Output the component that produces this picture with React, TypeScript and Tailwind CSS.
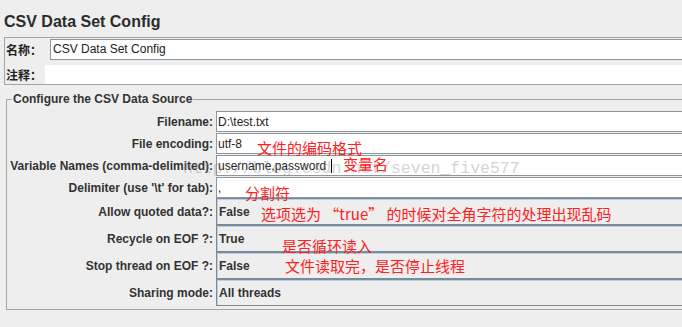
const fields = [
  { label: 'Filename:', value: 'D:\\test.txt', cursor: false },
  { label: 'File encoding:', value: 'utf-8', cursor: false },
  { label: 'Variable Names (comma-delimited):', value: 'username,password', cursor: true },
  { label: "Delimiter (use '\\t' for tab):", value: ',', cursor: false },
];

const combos = [
  { label: 'Allow quoted data?:', value: 'False' },
  { label: 'Recycle on EOF ?:', value: 'True' },
  { label: 'Stop thread on EOF ?:', value: 'False' },
  { label: 'Sharing mode:', value: 'All threads' },
];

// red notes written over the screenshot
const notes = [
  { text: '文件的编码格式', cls: 'left-[257px] top-[140px]' },
  { text: '变量名', cls: 'left-[343px] top-[156px]' },
  { text: '分割符', cls: 'left-[245px] top-[185px]' },
  { text: '选项选为 “true” 的时候对全角字符的处理出现乱码', cls: 'left-[261px] top-[206px]' },
  { text: '是否循环读入', cls: 'left-[282px] top-[238px]' },
  { text: '文件读取完，是否停止线程', cls: 'left-[285px] top-[258px]' },
];

export default function App() {
  return (
    <div className="relative w-[682px] h-[327px] overflow-hidden bg-[#eeeeee] font-['Liberation_Sans','Noto_Sans_CJK_SC',sans-serif] text-[#333333]">
      <div className="w-[700px]">
        <h1 className="h-[37px] pt-[12px] pl-[4px] text-[16px] leading-[19px] font-bold text-[#2b2b2b]">CSV Data Set Config</h1>

        <div className="ml-[4px] h-[48px] border-t border-l border-b border-[#a5a5a5]">
          <div className="flex items-center mt-[1px] h-[21px]">
            <span className="w-[45px] pl-[1px] text-[12px] font-bold font-['Noto_Sans_CJK_SC',sans-serif] leading-none text-[#222]">名称：</span>
            <div className="flex-1 h-[21px] bg-white border border-[#8e969d] pl-[2px] text-[12px] leading-[19px] text-[#222]">CSV Data Set Config</div>
          </div>
          <div className="flex items-center mt-[5px] h-[19px]">
            <span className="w-[40px] pl-[1px] text-[12px] font-bold font-['Noto_Sans_CJK_SC',sans-serif] leading-none text-[#222]">注释：</span>
            <div className="flex-1 h-[19px] bg-white"></div>
          </div>
        </div>

        <div className="relative ml-[6px] mt-[14px] h-[211px] border border-[#a5a5a5] pt-[11px]">
          <span className="absolute -top-[9px] left-[5px] px-[1px] bg-[#eeeeee] text-[12px] leading-[16px] font-bold text-[#333]">Configure the CSV Data Source</span>

          {fields.map((f) => (
            <div key={f.label} className="flex items-center h-[21px] mb-[1px]">
              <span className="w-[207px] pr-[1px] text-right text-[12px] font-bold leading-none">{f.label}</span>
              <div className="flex items-center flex-1 ml-[2px] h-[21px] bg-white border border-[#8e969d] pl-[1px] text-[12px] text-[#222]">
                {f.value}
                {f.cursor && <span className="ml-[5px] w-[1px] h-[14px] bg-black"></span>}
              </div>
            </div>
          ))}

          <div className="-mt-[1px]">
            {combos.map((c) => (
              <div key={c.label} className="flex items-center h-[27px]">
                <span className="w-[207px] pr-[1px] text-right text-[12px] font-bold leading-none">{c.label}</span>
                <div className="flex items-center flex-1 ml-[2px] h-[27px] border border-[#7a8a99] shadow-[inset_1px_1px_0_#b8cfe5] pl-[2px] text-[12px] font-bold text-[#333]">
                  {c.value}
                </div>
              </div>
            ))}
          </div>
        </div>
      </div>

      <span className="absolute left-[183px] top-[161px] text-[16.5px] leading-none font-['Liberation_Mono',monospace] text-[rgba(140,140,140,0.4)] whitespace-nowrap">
        http://blog.csdn.net/seven_five577
      </span>

      {notes.map((n) => (
        <span key={n.text} className={`absolute ${n.cls} text-[15px] leading-none whitespace-nowrap text-[#ff2020] font-['Noto_Sans_CJK_SC',sans-serif]`}>
          {n.text}
        </span>
      ))}
    </div>
  );
}
